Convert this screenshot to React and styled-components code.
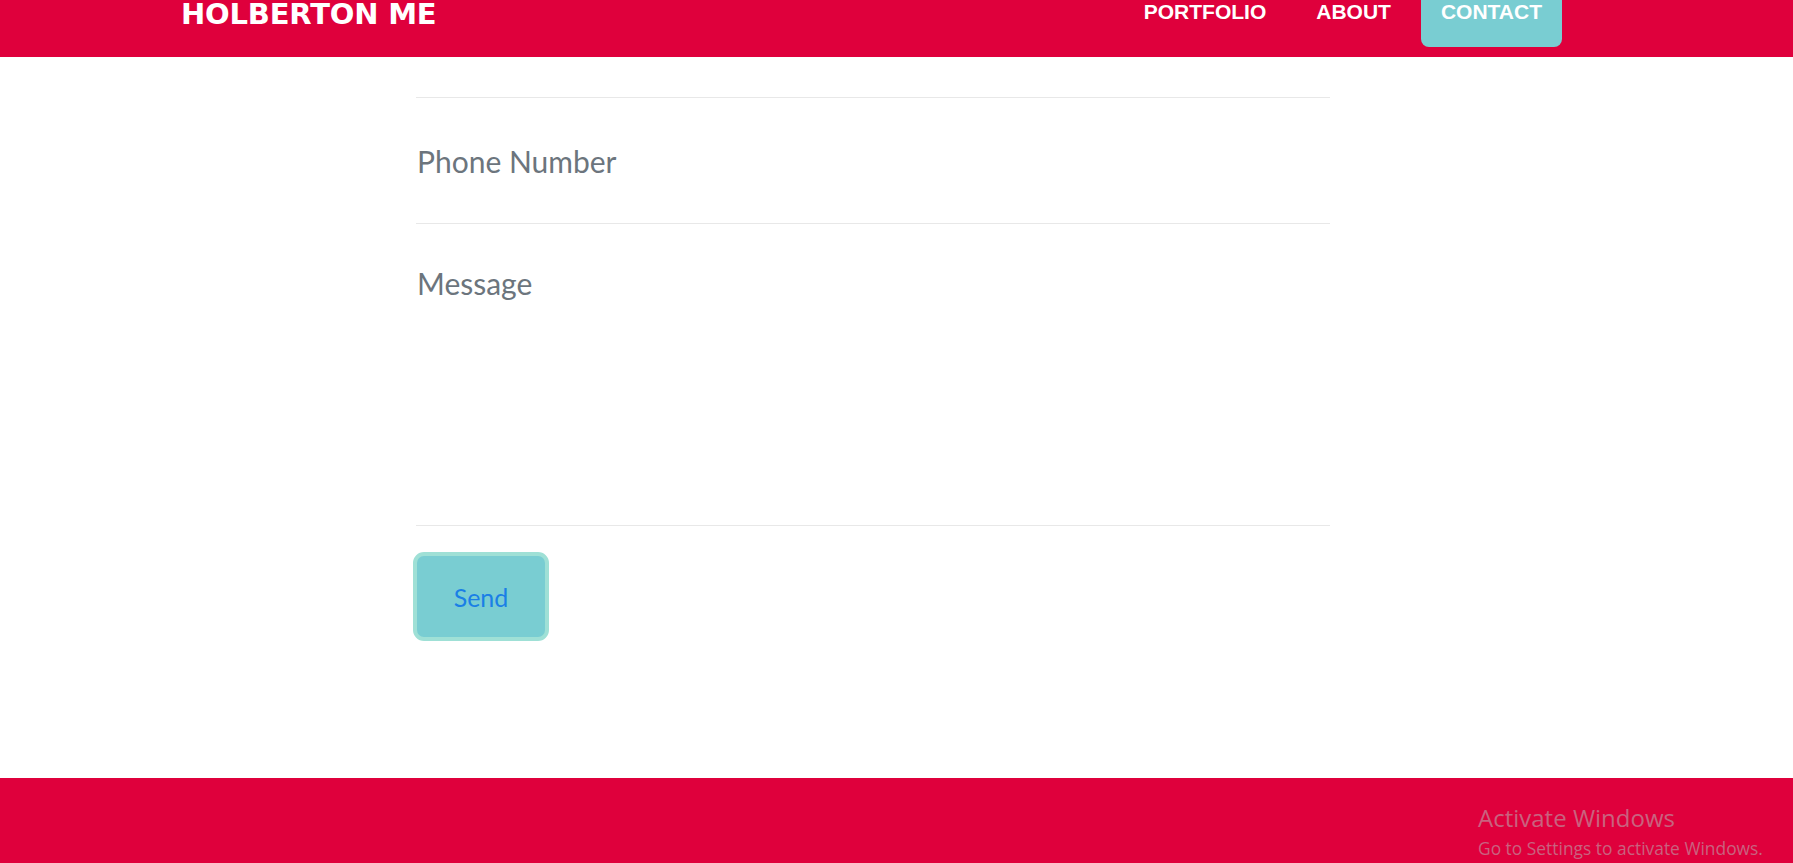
import React from "react";
import styled, { createGlobalStyle } from "styled-components";

const Global = createGlobalStyle`
  html, body { margin: 0; padding: 0; background: #ffffff; overflow: hidden; }
  body { font-family: "Lato", "Liberation Sans", sans-serif; }
  * { box-sizing: border-box; }
`;

const RED = "#df003c";
const TEAL = "#79cdd2";

const Page = styled.div`
  width: 1793px;
  height: 863px;
  display: flex;
  flex-direction: column;
  position: relative;
`;

const Header = styled.header`
  height: 57px;
  background: ${RED};
  display: flex;
  align-items: flex-start;
  justify-content: space-between;
  padding: 0 231px 0 181px;
`;

const Logo = styled.a`
  font-family: "DejaVu Sans", sans-serif;
  font-weight: 700;
  font-size: 29px;
  line-height: 28px;
  color: #ffffff;
  text-decoration: none;
  letter-spacing: -0.2px;
`;

const Nav = styled.nav`
  display: flex;
  gap: 10px;
  align-items: flex-start;
`;

const NavLink = styled.a`
  font-family: "Liberation Sans", Arial, sans-serif;
  font-weight: 700;
  font-size: 21px;
  line-height: 24px;
  color: #ffffff;
  text-decoration: none;
  padding: 0 20px 23px;
  border-radius: 0 0 8px 8px;
  background: ${(p) => (p.$active ? TEAL : "transparent")};
`;

const Main = styled.main`
  flex: 1;
  padding: 40px 0 0 413px;
`;

const Form = styled.form`
  width: 917px;
  display: flex;
  flex-direction: column;
  align-items: flex-start;
`;

const fieldText = `
  font-family: "Lato", sans-serif;
  font-size: 30px;
  color: #495057;
  background: transparent;
  outline: none;
  width: 914px;
  margin-left: 3px;
  border: none;
  border-top: 1px solid #e8e8e8;
  &::placeholder { color: #6c757d; opacity: 1; }
`;

const Input = styled.input`
  ${fieldText}
  height: 126px;
  padding: 0 0 0 1px;
  line-height: normal;
`;

const TextArea = styled.textarea`
  ${fieldText}
  height: 303px;
  padding: 41px 0 0 1px;
  line-height: 1.2;
  resize: none;
  border-bottom: 1px solid #e8e8e8;
`;

const SendButton = styled.button`
  margin-top: 26px;
  width: 136px;
  height: 89px;
  background: ${TEAL};
  border: 4px solid #9fe0d6;
  border-radius: 11px;
  font-family: "Lato", sans-serif;
  font-size: 25px;
  color: #1a7fe6;
  cursor: pointer;
`;

const Footer = styled.footer`
  height: 85px;
  background: ${RED};
`;

const Watermark = styled.div`
  position: absolute;
  left: 1478px;
  top: 803px;
  font-family: "Open Sans", "Noto Sans", sans-serif;
  color: #c9627f;
  pointer-events: none;
`;

const WatermarkTitle = styled.div`
  font-size: 24px;
  line-height: 30px;
`;

const WatermarkSub = styled.div`
  font-size: 17.4px;
  line-height: 30px;
`;

export default function App() {
  return (
    <Page>
      <Global />
      <Header>
        <Logo href="#">HOLBERTON ME</Logo>
        <Nav>
          <NavLink href="#">PORTFOLIO</NavLink>
          <NavLink href="#">ABOUT</NavLink>
          <NavLink href="#" $active>CONTACT</NavLink>
        </Nav>
      </Header>
      <Main>
        <Form onSubmit={(e) => e.preventDefault()}>
          <Input type="tel" placeholder="Phone Number" />
          <TextArea placeholder="Message" />
          <SendButton type="submit">Send</SendButton>
        </Form>
      </Main>
      <Footer />
      <Watermark>
        <WatermarkTitle>Activate Windows</WatermarkTitle>
        <WatermarkSub>Go to Settings to activate Windows.</WatermarkSub>
      </Watermark>
    </Page>
  );
}
